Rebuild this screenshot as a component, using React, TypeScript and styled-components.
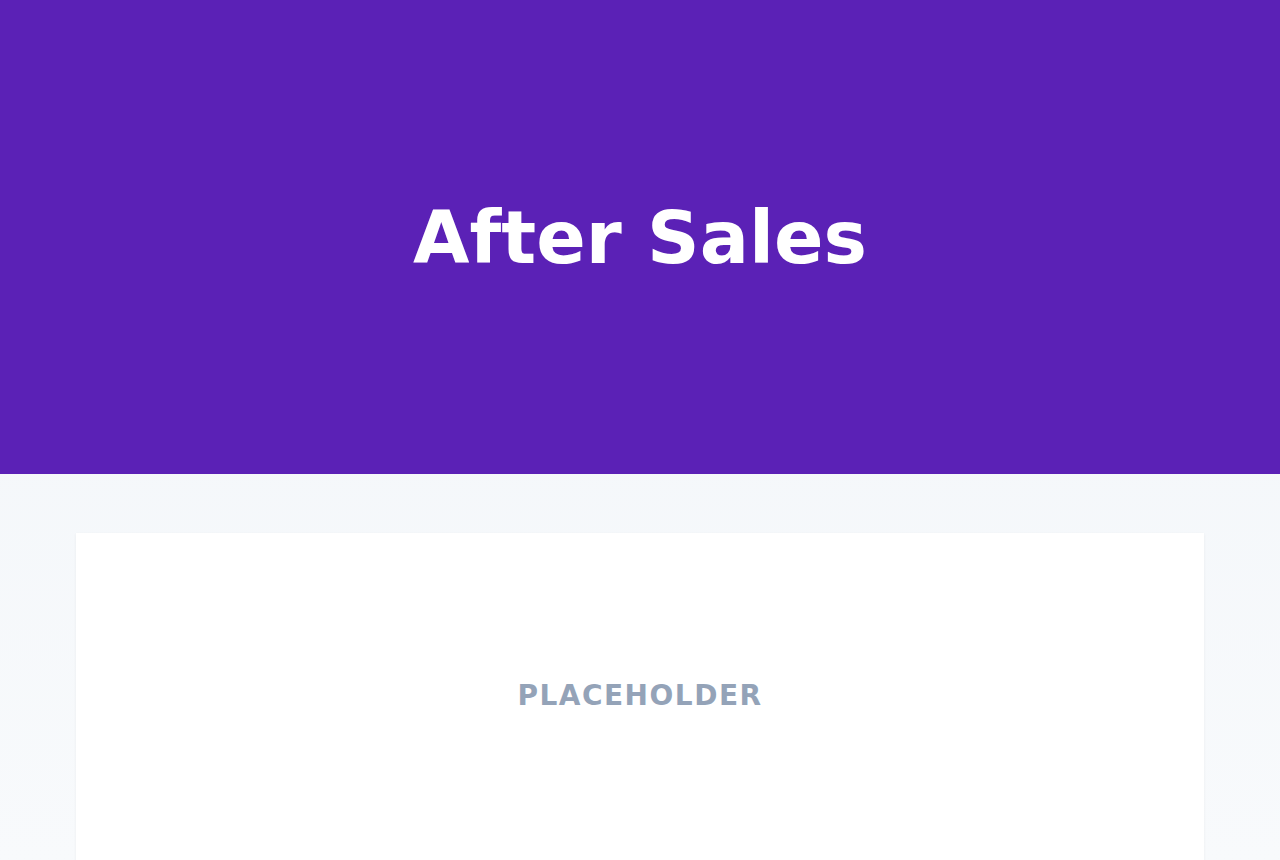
import React from 'react';
import styled, { createGlobalStyle } from 'styled-components';

const GlobalStyle = createGlobalStyle`
  html, body {
    margin: 0;
    padding: 0;
  }
  body {
    font-family: "DejaVu Sans", "Liberation Sans", sans-serif;
    background: linear-gradient(180deg, #f1f5f9 0%, #f8fafc 100%);
    min-height: 100vh;
  }
`;

const Page = styled.div`
  min-height: 100vh;
  display: flex;
  flex-direction: column;
`;

const Hero = styled.header`
  background: #5b21b6;
  height: 474px;
  display: flex;
  align-items: center;
  justify-content: center;
`;

const Title = styled.h1`
  margin: 0;
  color: #ffffff;
  font-size: 73px;
  font-weight: 700;
  line-height: 1;
`;

const Content = styled.main`
  padding: 59px 76px 0;
`;

const Card = styled.section`
  background: #ffffff;
  box-shadow: 0 1px 3px rgba(15, 23, 42, 0.06);
  padding: 145px 0 148px;
  text-align: center;
`;

const Placeholder = styled.p`
  margin: 0;
  color: #94a3b8;
  font-size: 28px;
  font-weight: 700;
  line-height: 36px;
  letter-spacing: 1.5px;
`;

const App: React.FC = () => {
  return (
    <Page>
      <GlobalStyle />
      <Hero>
        <Title>After Sales</Title>
      </Hero>
      <Content>
        <Card>
          <Placeholder>PLACEHOLDER</Placeholder>
        </Card>
      </Content>
    </Page>
  );
};

export default App;
